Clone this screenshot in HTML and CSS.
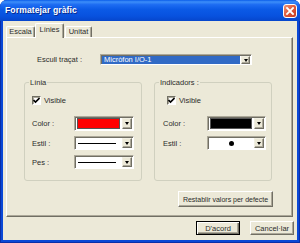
FILE: index.html
```html
<!DOCTYPE html>
<html lang="ca">
<head>
    <meta charset="UTF-8">
    <title>Formatejar gràfic</title>
    <link rel="stylesheet" href="styles.css">
</head>
<body>
    <div class="window">
        <div class="titlebar">
            <span class="title">Formatejar gràfic</span>
            <span class="close">
                <svg width="14" height="14" viewBox="0 0 14 14">
                    <defs>
                        <linearGradient id="cl" x1="0" y1="0" x2="1" y2="1">
                            <stop offset="0" stop-color="#F09A7C"/>
                            <stop offset="0.5" stop-color="#E0573A"/>
                            <stop offset="1" stop-color="#C23A1E"/>
                        </linearGradient>
                    </defs>
                    <rect x="0.5" y="0.5" width="13" height="13" rx="2.5" fill="url(#cl)" stroke="#fff" stroke-width="1"/>
                    <path d="M4 4 L10 10 M10 4 L4 10" stroke="#fff" stroke-width="1.8" stroke-linecap="square"/>
                </svg>
            </span>
        </div>

        <div class="client">
            <div class="tabs">
                <div class="tab tab-escala">Escala</div>
                <div class="tab tab-active">Línies</div>
                <div class="tab tab-unitat">Unitat</div>
            </div>

            <div class="panel">
                <div class="trace-row">
                    <span class="trace-label">Escull traçat :</span>
                    <div class="combo trace-combo">
                        <span class="combo-selected">Micròfon I/O-1</span>
                        <span class="drop"><i class="arrow"></i></span>
                    </div>
                </div>

                <div class="groups">
                    <div class="group group-line">
                        <span class="group-title">Línia</span>
                        <label class="check-row">
                            <span class="checkbox">
                                <svg width="7" height="7" viewBox="0 0 7 7"><path d="M0.5 3 L2.5 5 L6.5 1" fill="none" stroke="#000" stroke-width="1.6"/></svg>
                            </span>
                            Visible
                        </label>
                        <div class="field field-color">
                            <span class="field-label">Color :</span>
                            <div class="combo">
                                <span class="combo-box"><span class="swatch swatch-red"></span></span>
                                <span class="drop"><i class="arrow"></i></span>
                            </div>
                        </div>
                        <div class="field">
                            <span class="field-label">Estil :</span>
                            <div class="combo">
                                <span class="combo-box"><span class="line"></span></span>
                                <span class="drop"><i class="arrow"></i></span>
                            </div>
                        </div>
                        <div class="field">
                            <span class="field-label">Pes :</span>
                            <div class="combo">
                                <span class="combo-box"><span class="line"></span></span>
                                <span class="drop"><i class="arrow"></i></span>
                            </div>
                        </div>
                    </div>

                    <div class="group group-marker">
                        <span class="group-title">Indicadors :</span>
                        <label class="check-row">
                            <span class="checkbox">
                                <svg width="7" height="7" viewBox="0 0 7 7"><path d="M0.5 3 L2.5 5 L6.5 1" fill="none" stroke="#000" stroke-width="1.6"/></svg>
                            </span>
                            Visible
                        </label>
                        <div class="field field-color">
                            <span class="field-label">Color :</span>
                            <div class="combo">
                                <span class="combo-box"><span class="swatch swatch-black"></span></span>
                                <span class="drop"><i class="arrow"></i></span>
                            </div>
                        </div>
                        <div class="field">
                            <span class="field-label">Estil :</span>
                            <div class="combo">
                                <span class="combo-box"><span class="dot"></span></span>
                                <span class="drop"><i class="arrow"></i></span>
                            </div>
                        </div>
                    </div>
                </div>

                <div class="reset-row">
                    <button class="btn btn-reset">Restablir valors per defecte</button>
                </div>
            </div>

            <div class="actions">
                <button class="btn btn-default">D'acord</button>
                <button class="btn">Cancel·lar</button>
            </div>
        </div>
    </div>
</body>
</html>
```

FILE: styles.css
```css
body {
    margin: 0;
    width: 300px;
    height: 243px;
    overflow: hidden;
    font-family: "Liberation Sans", Arial, sans-serif;
    font-size: 7.5px;
    color: #2b2b2b;
    background: #fff;
}
.window {
    width: 300px;
    height: 243px;
    display: flex;
    flex-direction: column;
    background: #0A48D6;
    border-radius: 7px 7px 0 0;
    box-shadow: inset 1px 0 #0A2FA8, inset -1px 0 #0A2FA8, inset 0 -1px #0A2FA8;
}
.titlebar {
    height: 21px;
    flex: none;
    display: flex;
    align-items: center;
    justify-content: space-between;
    padding: 0 3px 0 5px;
    border-radius: 7px 7px 0 0;
    background: linear-gradient(#0A5DEA 0%, #3D8EF9 9%, #1D6CF2 22%, #0B5AE6 45%, #0852DF 75%, #0646CC 100%);
}
.title {
    color: #fff;
    font-weight: bold;
    font-size: 8.6px;
    letter-spacing: 0.1px;
    text-shadow: 1px 1px #0B2A8C;
    padding-bottom: 1px;
}
.close {
    display: flex;
    width: 14px;
    height: 14px;
}
.client {
    flex: 1;
    margin: 0 3px 3px;
    background: #ECE9D8;
    display: flex;
    flex-direction: column;
}

/* tabs */
.tabs {
    display: flex;
    align-items: flex-end;
    height: 14px;
    padding: 2px 0 0 3px;
}
.tab {
    height: 11px;
    box-sizing: border-box;
    line-height: 10px;
    text-align: center;
    border: 1px solid;
    border-bottom: none;
    border-color: #fff #716F64 #716F64 #fff;
    border-radius: 2px 2px 0 0;
    box-shadow: inset -1px 0 #ACA899;
}
.tab-escala {
    width: 29px;
}
.tab-active {
    width: 29px;
    height: 15px;
    margin-bottom: -1px;
    line-height: 11px;
    background: #ECE9D8;
    position: relative;
    z-index: 1;
}
.tab-unitat {
    width: 27px;
    margin-left: 1px;
}

/* panel */
.panel {
    width: 287px;
    height: 180px;
    box-sizing: border-box;
    margin-left: 3px;
    padding-top: 16px;
    border: 1px solid;
    border-color: #fff #716F64 #716F64 #fff;
    box-shadow: inset -1px -1px #ACA899;
    display: flex;
    flex-direction: column;
}
.trace-row {
    display: flex;
    align-items: center;
    padding-left: 30px;
}
.trace-label {
    width: 63px;
}
.combo {
    display: flex;
    width: 60px;
    height: 15px;
    box-sizing: border-box;
    padding: 1px;
    border: 1px solid;
    border-color: #ACA899 #fff #fff #ACA899;
    box-shadow: inset 1px 1px #716F64;
    background: #fff;
}
.trace-combo {
    width: 152px;
    height: 11px;
    padding: 1px 1px 0 1px;
}
.combo-selected {
    flex: 1;
    background: #316AC5;
    color: #fff;
    line-height: 8px;
    padding-left: 2px;
    margin-right: 1px;
}
.drop {
    width: 10px;
    box-sizing: border-box;
    display: flex;
    align-items: center;
    justify-content: center;
    background: #ECE9D8;
    border: 1px solid;
    border-color: #F1EFE2 #716F64 #716F64 #F1EFE2;
    box-shadow: inset -1px -1px #ACA899;
}
.arrow {
    width: 0;
    height: 0;
    border-left: 2.5px solid transparent;
    border-right: 2.5px solid transparent;
    border-top: 3px solid #000;
}
.trace-combo .drop {
    width: 9px;
}

/* groups */
.groups {
    display: flex;
    gap: 12px;
    margin-top: 17px;
    padding-left: 17px;
}
.group {
    width: 118px;
    height: 99px;
    box-sizing: border-box;
    border: 1px solid #D0D0BF;
    border-radius: 3px;
    display: flex;
    flex-direction: column;
}
.group-title {
    align-self: flex-start;
    margin: -5px 0 0 4px;
    padding: 0 1px;
    line-height: 9px;
    background: #ECE9D8;
}
.check-row {
    display: flex;
    align-items: center;
    gap: 3px;
    margin-top: 9px;
    height: 9px;
    padding-left: 7px;
}
.group-marker .check-row {
    padding-left: 12px;
}
.checkbox {
    width: 9px;
    height: 9px;
    box-sizing: border-box;
    display: flex;
    align-items: center;
    justify-content: center;
    background: #fff;
    border: 1px solid;
    border-color: #716F64 #fff #fff #716F64;
    box-shadow: inset 1px 1px #ACA899;
}
.field {
    display: flex;
    align-items: center;
    margin-top: 5px;
    padding-left: 7px;
}
.field .combo {
    height: 14px;
}
.field-color {
    margin-top: 11px;
}
.field-color .combo {
    height: 15px;
}
.field-label {
    width: 42px;
}
.group-marker .field {
    padding-left: 8px;
}
.group-marker .field-label {
    width: 44px;
}
.group-marker .combo {
    width: 59px;
}
.combo-box {
    flex: 1;
    display: flex;
    align-items: center;
    justify-content: center;
    margin-right: 1px;
}
.swatch {
    width: 100%;
    height: 100%;
    box-sizing: border-box;
    margin: 0 1px;
    border: 1px solid #555;
}
.swatch-red {
    background: #FF0000;
}
.swatch-black {
    background: #000;
}
.line {
    width: 38px;
    height: 1px;
    background: #000;
    margin-right: 4px;
}
.dot {
    width: 5px;
    height: 5px;
    border-radius: 50%;
    background: #000;
}

/* buttons */
.reset-row {
    display: flex;
    justify-content: flex-end;
    margin-top: 10px;
    padding-right: 19px;
}
.btn {
    font-family: "Liberation Sans", Arial, sans-serif;
    font-size: 7.5px;
    color: #2b2b2b;
    height: 14px;
    width: 44px;
    padding: 0;
    box-sizing: border-box;
    background: #ECE9D8;
    border: 1px solid;
    border-color: #fff #716F64 #716F64 #fff;
    box-shadow: inset -1px -1px #ACA899;
}
.btn-reset {
    width: 95px;
    height: 16px;
    font-size: 7px;
}
.btn-default {
    border: 1px solid #000;
    box-shadow: inset 1px 1px #fff, inset -1px -1px #716F64, inset -2px -2px #ACA899;
}
.actions {
    display: flex;
    justify-content: flex-end;
    gap: 10px;
    margin-top: 4px;
    padding-right: 3px;
}
```
